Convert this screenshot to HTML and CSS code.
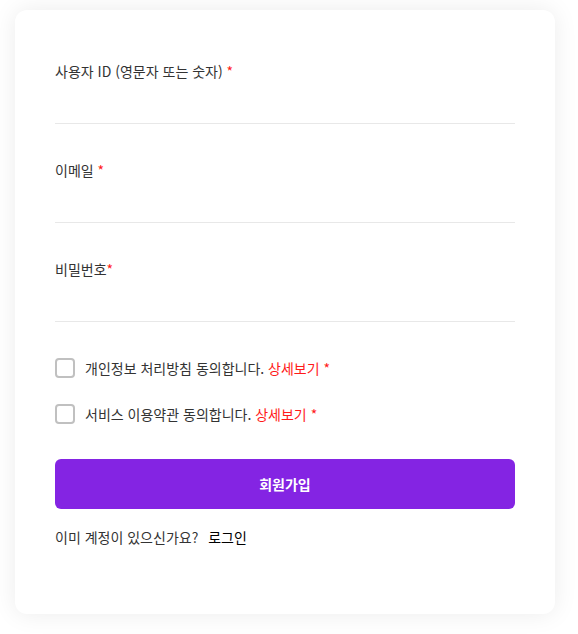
FILE: index.html
```html
<!DOCTYPE html>
<html lang="ko">
<head>
    <meta charset="utf-8">
    <meta name="viewport" content="width=device-width, initial-scale=1.0">
    <title>회원가입</title>
    <link rel="stylesheet" href="styles.css">
</head>
<body>
    <main>
        <form class="card">
            <!-- Fields -->
            <div class="field">
                <label for="user_id">사용자 ID (영문자 또는 숫자) <span class="required">*</span></label>
                <input type="text" id="user_id" name="user_id">
            </div>
            <div class="field">
                <label for="email">이메일 <span class="required">*</span></label>
                <input type="email" id="email" name="email">
            </div>
            <div class="field">
                <label for="password">비밀번호<span class="required">*</span></label>
                <input type="password" id="password" name="password">
            </div>

            <!-- Agreements -->
            <div class="agreements">
                <label class="check">
                    <input type="checkbox" name="privacy">
                    <span class="box"></span>
                    <span>개인정보 처리방침 동의합니다. <a href="#" class="detail">상세보기</a> <span class="required">*</span></span>
                </label>
                <label class="check">
                    <input type="checkbox" name="terms">
                    <span class="box"></span>
                    <span>서비스 이용약관 동의합니다. <a href="#" class="detail">상세보기</a> <span class="required">*</span></span>
                </label>
            </div>

            <button type="submit" class="submit">회원가입</button>

            <p class="login">이미 계정이 있으신가요? <a href="#">로그인</a></p>
        </form>
    </main>
</body>
</html>
```

FILE: styles.css
```css
* {
    margin: 0;
    box-sizing: border-box;
}

body {
    font-family: "Noto Sans CJK KR", "Noto Sans", sans-serif;
    font-size: 14px;
    color: #333;
    background-color: #fff;
    padding: 10px 23px 20px 15px;
}

.card {
    width: 540px;
    height: 604px;
    background-color: #fff;
    border-radius: 12px;
    box-shadow: 0 0 24px rgba(0, 0, 0, 0.08);
    padding: 51px 40px 40px;
}

/* Fields */
.field {
    display: flex;
    flex-direction: column;
    margin-bottom: 36px;
}

.field label {
    line-height: 20px;
}

.field input {
    height: 43px;
    border: none;
    border-bottom: 1px solid #e8e8e8;
    outline: none;
    font-size: 14px;
}

.required {
    color: #ff1a1a;
}

/* Agreements */
.agreements {
    display: flex;
    flex-direction: column;
    gap: 26px;
    margin-top: 36px;
}

.check {
    display: flex;
    align-items: center;
    gap: 10px;
    line-height: 20px;
    cursor: pointer;
}

.check input {
    display: none;
}

.box {
    width: 20px;
    height: 20px;
    border: 2px solid #c0c0c0;
    border-radius: 4px;
    flex-shrink: 0;
}

.detail {
    color: #ff1a1a;
    text-decoration: none;
}

/* Button */
.submit {
    display: block;
    width: 100%;
    height: 50px;
    margin-top: 35px;
    background-color: #8424e3;
    color: white;
    border: none;
    border-radius: 6px;
    font-family: inherit;
    font-size: 14px;
    font-weight: bold;
    cursor: pointer;
}

.login {
    margin-top: 18px;
    line-height: 20px;
}

.login a {
    margin-left: 6px;
    color: #000;
    text-decoration: none;
}
```
